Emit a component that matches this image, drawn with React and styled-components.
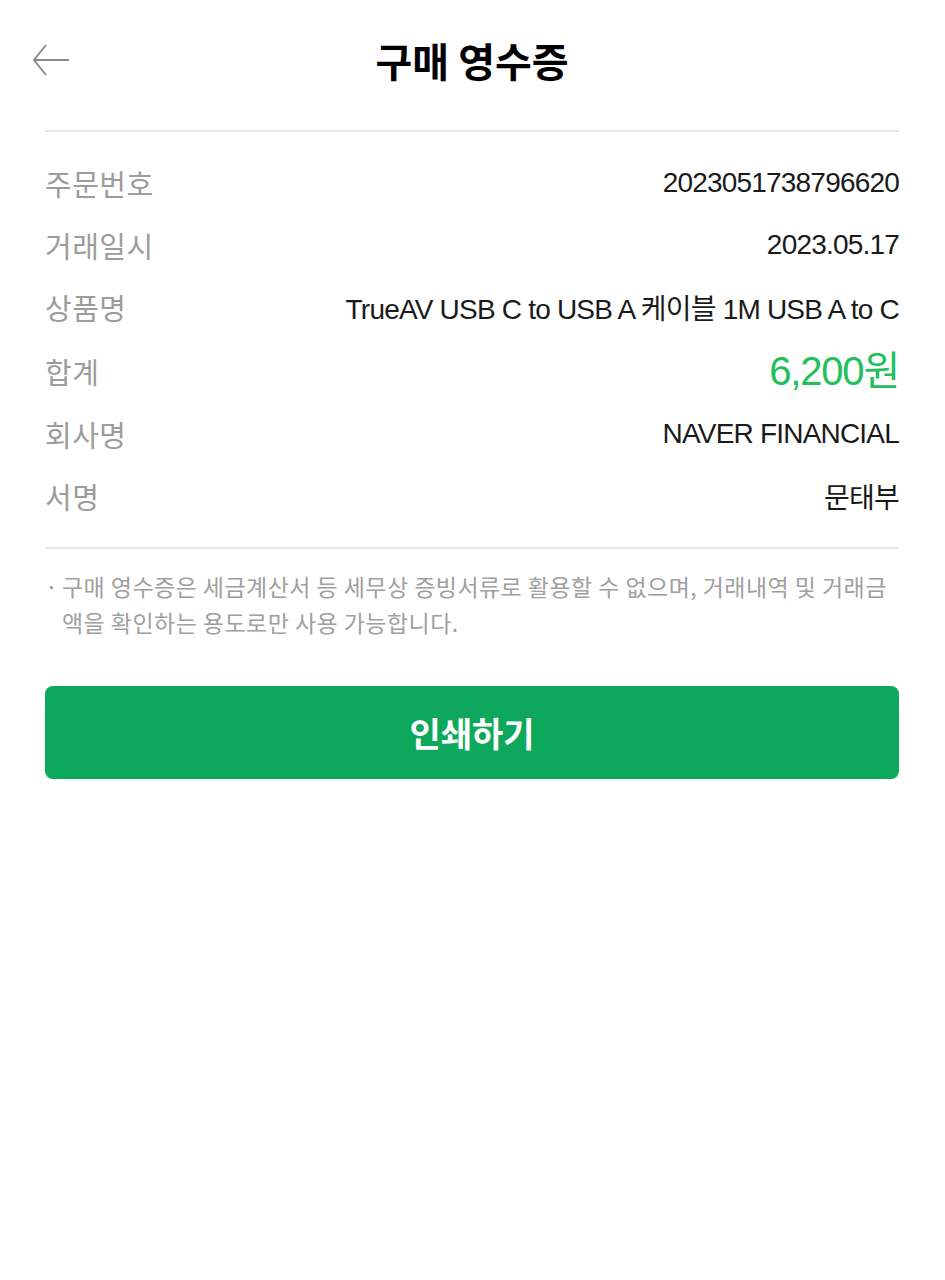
import React from "react";
import styled, { createGlobalStyle } from "styled-components";

const GlobalStyle = createGlobalStyle`
  body {
    margin: 0;
    background: #fff;
    font-family: "Liberation Sans", "Noto Sans CJK KR", sans-serif;
    color: #222;
  }
`;

const Page = styled.div`
  width: 945px;
  min-height: 1280px;
  padding: 0 46px 0 45px;
  box-sizing: border-box;
  background: #fff;
`;

const Header = styled.header`
  position: relative;
  height: 120px;
  padding-bottom: 10px;
  display: flex;
  align-items: center;
  justify-content: center;
`;

const BackButton = styled.button`
  position: absolute;
  left: -14px;
  top: 43px;
  width: 40px;
  height: 34px;
  padding: 0;
  border: none;
  background: none;
  cursor: pointer;
`;

const Title = styled.h1`
  margin: 0;
  font-family: "Noto Sans CJK KR", sans-serif;
  font-size: 40px;
  font-weight: 700;
  letter-spacing: 0;
  color: #000;
`;

const InfoList = styled.dl`
  margin: 0;
  padding: 20px 0 20px;
  border-top: 2px solid #e8e8e8;
  border-bottom: 2px solid #e8e8e8;
`;

const Row = styled.div`
  display: flex;
  justify-content: space-between;
  align-items: center;
  height: ${(p) => (p.$tall ? 65 : 62)}px;
`;

const Label = styled.dt`
  font-family: "Noto Sans CJK KR", sans-serif;
  font-size: 29px;
  letter-spacing: 0.5px;
  color: #9c9c9c;
`;

const Value = styled.dd`
  margin: 0;
  font-family: "Liberation Sans", "Noto Sans CJK KR", sans-serif;
  font-size: 28px;
  letter-spacing: -0.8px;
  color: #1a1a1a;
`;

const Price = styled(Value)`
  font-size: 40px;
  letter-spacing: -1.2px;
  color: #22bf5c;
  margin-top: -6px;
`;

const Notice = styled.p`
  position: relative;
  margin: 19px 0 0;
  padding-left: 17px;
  font-family: "Noto Sans CJK KR", sans-serif;
  font-size: 23px;
  line-height: 36px;
  letter-spacing: 0.45px;
  color: #a0a0a0;
  &::before {
    content: "·";
    position: absolute;
    left: 0;
    top: 0;
  }
`;

const PrintButton = styled.button`
  display: block;
  width: 100%;
  height: 93px;
  margin-top: 46px;
  border: none;
  border-radius: 8px;
  background: #0ea85c;
  color: #fff;
  font-family: "Noto Sans CJK KR", sans-serif;
  font-size: 34px;
  font-weight: 700;
  letter-spacing: 0;
  cursor: pointer;
`;

function BackArrow() {
  return (
    <svg width="40" height="34" viewBox="0 0 40 34" fill="none">
      <path d="M38 17H3" stroke="#8a8a8a" strokeWidth="2" />
      <path d="M15 2L3 17L15 32" stroke="#8a8a8a" strokeWidth="2" />
    </svg>
  );
}

const rows = [
  { label: "주문번호", value: "2023051738796620" },
  { label: "거래일시", value: "2023.05.17" },
  { label: "상품명", value: "TrueAV USB C to USB A 케이블 1M USB A to C" },
  { label: "합계", value: "6,200원", price: true },
  { label: "회사명", value: "NAVER FINANCIAL" },
  { label: "서명", value: "문태부" },
];

export default function App() {
  return (
    <Page>
      <GlobalStyle />
      <Header>
        <BackButton aria-label="뒤로">
          <BackArrow />
        </BackButton>
        <Title>구매 영수증</Title>
      </Header>
      <InfoList>
        {rows.map((r) => (
          <Row key={r.label} $tall={r.price}>
            <Label>{r.label}</Label>
            {r.price ? <Price>{r.value}</Price> : <Value>{r.value}</Value>}
          </Row>
        ))}
      </InfoList>
      <Notice>
        구매 영수증은 세금계산서 등 세무상 증빙서류로 활용할 수 없으며, 거래내역 및 거래금
        <br />
        액을 확인하는 용도로만 사용 가능합니다.
      </Notice>
      <PrintButton>인쇄하기</PrintButton>
    </Page>
  );
}
